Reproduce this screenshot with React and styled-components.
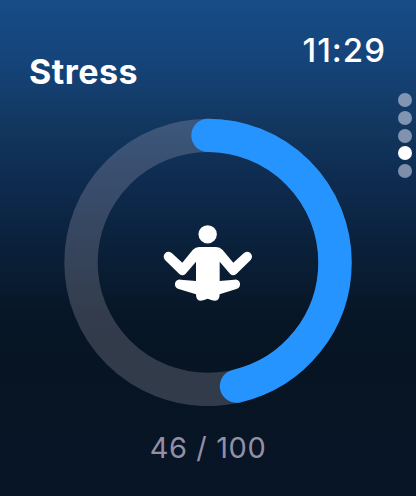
import styled, { createGlobalStyle } from "styled-components";

const PAGES = 5;
const ACTIVE_PAGE = 3;

const RADIUS = 127;
const CIRCUMFERENCE = 2 * Math.PI * RADIUS;

function StressRing({ progress, children }) {
  return (
    <RingContainer>
      <RingSvg viewBox="0 0 288 288">
        <Track cx="144" cy="144.4" r={RADIUS} />
        <Progress
          cx="144"
          cy="144.4"
          r={RADIUS}
          strokeDasharray={`${progress * CIRCUMFERENCE} ${CIRCUMFERENCE}`}
          transform="rotate(-90 144 144.4)"
        />
      </RingSvg>
      {children}
    </RingContainer>
  );
}

function MeditationIcon() {
  return (
    <IconSvg viewBox="0 0 348 300">
      <circle cx="173" cy="73" r="27.5" />
      {/* torso, arms and crossed legs */}
      <path d="M148 111 H198 Q210 111 218 120 L250 158 L281 130 A14.5 14.5 0 0 1 302 150 L259 192 Q249 200 240 191 L209 155 V213 L253 209 A14 14 0 0 1 259 237 L209 253 Q209 272 195 272 Q188 272 173 266 Q158 272 151 272 Q138 272 138 253 L86 237 A14 14 0 0 1 92 209 L138 213 V155 L107 191 Q98 200 88 192 L45 150 A14.5 14.5 0 0 1 66 130 L97 158 L128 120 Q136 111 148 111 Z" />
    </IconSvg>
  );
}

function App() {
  const score = 46;
  const max = 100;

  return (
    <Screen>
      <GlobalStyle />
      <Header>
        <Title>Stress</Title>
        <Time>11:29</Time>
      </Header>
      <StressRing progress={0.4637}>
        <MeditationIcon />
      </StressRing>
      <Score>
        {score} / {max}
      </Score>
      <Pager>
        {Array.from({ length: PAGES }, (_, index) => (
          <Dot key={index} $active={index === ACTIVE_PAGE} />
        ))}
      </Pager>
    </Screen>
  );
}

export default App;

const GlobalStyle = createGlobalStyle`
  * {
    box-sizing: border-box;
  }
  body {
    margin: 0;
    background-color: #061423;
  }
`;

const Screen = styled.main`
  position: relative;
  display: flex;
  flex-direction: column;
  align-items: center;
  width: 416px;
  height: 496px;
  overflow: hidden;
  color: #fff;
  font-family: Inter, sans-serif;
  background: linear-gradient(
    #174c86 0px,
    #15447a 60px,
    #12375f 125px,
    #0e2b50 180px,
    #0a2039 250px,
    #071626 315px,
    #061423 360px,
    #071526 496px
  );
`;

const Header = styled.header`
  display: flex;
  justify-content: space-between;
  align-items: flex-start;
  width: 100%;
  height: 118px;
  padding: 30px 30px 0 29px;
`;

const Title = styled.h1`
  margin: 22px 0 0;
  font-size: 34px;
  line-height: 40px;
  font-weight: 650;
  letter-spacing: 0.5px;
`;

const Time = styled.time`
  font-size: 33px;
  line-height: 40px;
  font-weight: 500;
  letter-spacing: 1px;
`;

const RingContainer = styled.div`
  display: grid;
  place-items: center;
  width: 288px;
  height: 288px;

  > * {
    grid-area: 1 / 1;
  }
`;

const RingSvg = styled.svg`
  width: 288px;
  height: 288px;
  fill: none;
  stroke-width: 33.4px;
`;

const Track = styled.circle`
  stroke: rgba(230, 215, 232, 0.2);
`;

const Progress = styled.circle`
  stroke: #2694ff;
  stroke-linecap: round;
`;

const IconSvg = styled.svg`
  width: 116px;
  height: 100px;
  margin-top: -4px;
  fill: #fff;
`;

const Score = styled.p`
  margin: 24px 0 0;
  color: #958fa6;
  font-size: 29px;
  line-height: 36px;
  font-weight: 400;
  letter-spacing: 0.6px;
`;

const Pager = styled.nav`
  position: absolute;
  top: 93px;
  right: 4px;
  display: flex;
  flex-direction: column;
  gap: 3.8px;
`;

const Dot = styled.span`
  width: 14px;
  height: 14px;
  border-radius: 50%;
  background-color: ${(props) => (props.$active ? "#fff" : "rgba(240, 240, 255, 0.5)")};
`;
